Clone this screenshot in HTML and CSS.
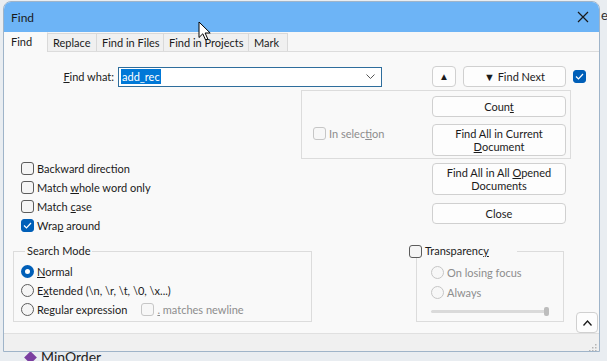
FILE: index.html
```html
<!DOCTYPE html>
<html lang="en">
  <head>
    <meta charset="UTF-8" />
    <title>Find</title>
    <link rel="stylesheet" href="styles.css">
  </head>
  <body>
    <div class="desk">
      <span class="desk-e">e</span>
      <div class="desk-row"><span class="desk-icon"></span><span>MinOrder</span></div>
    </div>

    <div class="dialog">
      <div class="titlebar">
        <span class="title">Find</span>
        <svg class="close" width="12" height="12" viewBox="0 0 12 12">
          <path d="M1 1 L11 11 M11 1 L1 11" stroke="#1a1a1a" stroke-width="1.2" fill="none" />
        </svg>
      </div>

      <div class="tabs">
        <span class="tab active">Find</span>
        <span class="tab w-replace">Replace</span>
        <span class="tab w-files">Find in Files</span>
        <span class="tab w-projects">Find in Projects</span>
        <span class="tab w-mark">Mark</span>
      </div>

      <div class="panel">
        <div class="find-row">
          <label class="find-label"><u>F</u>ind what:</label>
          <div class="combo">
            <span class="sel">add_rec</span>
            <svg class="chev" width="9" height="5" viewBox="0 0 9 5">
              <path d="M0.5 0.5 L4.5 4.5 L8.5 0.5" stroke="#555" fill="none" />
            </svg>
          </div>
          <button class="btn up">&#9650;</button>
          <button class="btn next">&#9660; Find Next</button>
          <span class="cb checked row-cb">
            <svg width="9" height="7" viewBox="0 0 9 7"><path d="M1 3.5 L3.5 6 L8 1" stroke="#fff" stroke-width="1.2" fill="none" /></svg>
          </span>
        </div>

        <div class="scope">
          <div class="scope-left">
            <label class="check disabled"><span class="cb"></span><span>In selec<u>t</u>ion</span></label>
          </div>
          <div class="btn-col">
            <button class="btn">Coun<u>t</u></button>
            <button class="btn tall">Find All in Current<br><u>D</u>ocument</button>
          </div>
        </div>

        <div class="middle">
          <div class="options">
            <label class="check"><span class="cb"></span><span>Backward direction</span></label>
            <label class="check"><span class="cb"></span><span>Match <u>w</u>hole word only</span></label>
            <label class="check"><span class="cb"></span><span>Match <u>c</u>ase</span></label>
            <label class="check">
              <span class="cb checked">
                <svg width="9" height="7" viewBox="0 0 9 7"><path d="M1 3.5 L3.5 6 L8 1" stroke="#fff" stroke-width="1.2" fill="none" /></svg>
              </span>
              <span>Wra<u>p</u> around</span>
            </label>
          </div>
          <div class="btn-col lower-btns">
            <button class="btn tall">Find All in All <u>O</u>pened<br>Documents</button>
            <button class="btn">Close</button>
          </div>
        </div>

        <div class="lower">
          <fieldset class="mode">
            <legend>Search Mode</legend>
            <label class="check"><span class="radio on"></span><span><u>N</u>ormal</span></label>
            <label class="check"><span class="radio"></span><span>E<u>x</u>tended (\n, \r, \t, \0, \x...)</span></label>
            <div class="check">
              <span class="radio"></span><span>Re<u>g</u>ular expression</span>
              <label class="check newline disabled"><span class="cb"></span><span><u>.</u> matches newline</span></label>
            </div>
          </fieldset>

          <fieldset class="transp">
            <legend><label class="check"><span class="cb"></span><span>Transparenc<u>y</u></span></label></legend>
            <label class="check disabled"><span class="radio"></span><span>On losing focus</span></label>
            <label class="check disabled"><span class="radio"></span><span>Always</span></label>
            <div class="slider"><span class="thumb"></span></div>
          </fieldset>

          <button class="btn collapse">
            <svg width="9" height="6" viewBox="0 0 9 6"><path d="M0.5 5.5 L4.5 1 L8.5 5.5" stroke="#1a1a1a" stroke-width="1.3" fill="none" /></svg>
          </button>
        </div>
      </div>

      <div class="statusbar">
        <svg class="grip" width="8" height="8" viewBox="0 0 8 8">
          <rect x="6" y="0" width="1.5" height="1.5" fill="#b5b5b5" />
          <rect x="3" y="3" width="1.5" height="1.5" fill="#b5b5b5" />
          <rect x="6" y="3" width="1.5" height="1.5" fill="#b5b5b5" />
          <rect x="0" y="6" width="1.5" height="1.5" fill="#b5b5b5" />
          <rect x="3" y="6" width="1.5" height="1.5" fill="#b5b5b5" />
          <rect x="6" y="6" width="1.5" height="1.5" fill="#b5b5b5" />
        </svg>
      </div>
    </div>

    <svg class="cursor" width="14" height="21" viewBox="0 0 14 21">
      <path d="M1 1 L1 16.5 L4.8 12.8 L7.6 19 L9.8 18 L7.1 12 L12.2 12 Z" fill="#fff" stroke="#000" stroke-width="1" stroke-linejoin="round" />
    </svg>
  </body>
</html>
```

FILE: styles.css
```css
body {
  margin: 0;
  width: 607px;
  height: 361px;
  overflow: hidden;
  position: relative;
  background-color: #e9edf1;
  font-family: Lato, "Noto Sans", sans-serif;
  font-size: 11px;
  color: #1b1b1b;
}
.desk {
  position: absolute;
  inset: 0;
}
.desk-e {
  position: absolute;
  top: 7px;
  left: 601px;
  font-size: 13px;
  color: #333;
}
.desk-row {
  position: absolute;
  top: 349px;
  left: 26px;
  display: flex;
  align-items: center;
  gap: 6px;
  font-size: 14px;
  line-height: 16px;
  color: #222;
}
.desk-icon {
  width: 9px;
  height: 9px;
  background-color: #7b3fa0;
  transform: rotate(45deg);
}
.dialog {
  position: absolute;
  top: 1px;
  left: 3px;
  width: 597px;
  height: 351px;
  background-color: #f9f9f9;
  border: 1px solid #9fb4c9;
  border-radius: 8px 8px 0 0;
  box-sizing: border-box;
  overflow: hidden;
  display: flex;
  flex-direction: column;
}
.titlebar {
  height: 30px;
  flex: none;
  background-color: #6db4f6;
  display: flex;
  align-items: center;
  justify-content: space-between;
  padding: 0 7px 0 7px;
}
.title {
  font-size: 12px;
  color: #1a1a1a;
}
.close {
  margin-right: 3px;
}
.tabs {
  height: 19px;
  flex: none;
  display: flex;
  align-items: flex-end;
  background-color: #f7f7f7;
  border-bottom: 1px solid #dcdcdc;
}
.tab {
  height: 18px;
  box-sizing: border-box;
  padding: 0 0 0 5px;
  display: flex;
  align-items: center;
  white-space: nowrap;
  overflow: hidden;
  background-color: #f0f0f0;
  border: 1px solid #d9d9d9;
  border-bottom: none;
  border-left: none;
}
.tab.active {
  height: 20px;
  width: 44px;
  margin-bottom: -1px;
  padding: 0 0 3px 7px;
  background-color: #f9f9f9;
  border-color: transparent #d9d9d9 transparent transparent;
}
.w-replace { width: 49px; }
.w-files { width: 67px; }
.w-projects { width: 85px; }
.w-mark { width: 39px; }

.panel {
  flex: 1;
  padding-top: 14px;
  position: relative;
}
.find-row {
  display: flex;
  align-items: center;
  height: 21px;
}
.find-label {
  width: 110px;
  text-align: right;
  margin-right: 4px;
}
.combo {
  width: 264px;
  height: 20px;
  box-sizing: border-box;
  background-color: #fff;
  border: 1px solid #2e6d9c;
  display: flex;
  align-items: center;
  justify-content: space-between;
  padding: 0 6px 0 2px;
}
.sel {
  background-color: #0078d7;
  color: #fff;
  padding: 0 1px;
  line-height: 15px;
}
.btn {
  font: inherit;
  color: #1b1b1b;
  background-color: #fdfdfd;
  border: 1px solid #d0d0d0;
  border-radius: 4px;
  height: 21px;
  padding: 0;
  line-height: 13px;
}
.up {
  width: 24px;
  margin-left: 50px;
  font-size: 10px;
}
.next {
  width: 103px;
  margin-left: 7px;
}
.row-cb {
  margin-left: 7px;
}

.cb {
  width: 13px;
  height: 13px;
  box-sizing: border-box;
  border: 1px solid #5c5c5c;
  border-radius: 3px;
  background-color: #f5f5f5;
  display: inline-flex;
  align-items: center;
  justify-content: center;
  flex: none;
}
.cb.checked {
  background-color: #005fb8;
  border-color: #005fb8;
}
.radio {
  width: 13px;
  height: 13px;
  box-sizing: border-box;
  border: 1px solid #5c5c5c;
  border-radius: 50%;
  background-color: #f5f5f5;
  flex: none;
}
.radio.on {
  border: 4px solid #005fb8;
  background-color: #fff;
}
.check {
  display: flex;
  align-items: center;
  gap: 3px;
  height: 19px;
  white-space: nowrap;
}
.disabled {
  color: #8d8d8d;
}
.disabled .cb,
.disabled .radio {
  border-color: #c6c6c6;
  background-color: #f7f7f7;
}

.scope {
  margin: 3px 0 0 297px;
  width: 270px;
  height: 69px;
  box-sizing: border-box;
  border: 1px solid #dcdcdc;
  display: flex;
}
.scope-left {
  width: 130px;
  padding: 33px 0 0 11px;
  box-sizing: border-box;
}
.btn-col {
  display: flex;
  flex-direction: column;
  gap: 7px;
  width: 134px;
  padding-top: 5px;
}
.btn-col .btn {
  width: 134px;
}
.btn.tall {
  height: 32px;
}

.middle {
  height: 85px;
  display: flex;
}
.options {
  width: 411px;
  padding-left: 17px;
}
.lower-btns {
  padding-top: 4px;
  gap: 8px;
}

.lower {
  display: flex;
  align-items: flex-start;
}
fieldset {
  margin: 0;
  padding: 0;
  border: 1px solid #dcdcdc;
  min-width: 0;
}
legend {
  line-height: 14px;
  padding: 0 2px;
}
.mode {
  margin-left: 9px;
  width: 299px;
  height: 78px;
  box-sizing: border-box;
  padding: 4px 0 0 7px;
}
.mode legend {
  margin-left: 4px;
}
.newline {
  margin-left: 11px;
}
.transp {
  margin-left: 104px;
  width: 148px;
  height: 78px;
  box-sizing: border-box;
  padding: 4px 0 0 14px;
}
.transp legend {
  margin-left: -22px;
  padding: 0 28px 0 0;
}
.transp legend .check {
  height: 14px;
}
.transp .check {
  height: 20px;
}
.slider {
  width: 118px;
  height: 3px;
  margin-top: 8px;
  background-color: #dadada;
  border-radius: 2px;
  display: flex;
  justify-content: flex-end;
  align-items: center;
}
.thumb {
  width: 5px;
  height: 9px;
  border-radius: 2px;
  background-color: #bdbdbd;
}
.collapse {
  width: 22px;
  margin: 68px 0 0 12px;
  display: flex;
  align-items: center;
  justify-content: center;
}

.statusbar {
  height: 18px;
  flex: none;
  background-color: #f0f0f0;
  border-top: 1px solid #e0e0e0;
  display: flex;
  justify-content: flex-end;
  align-items: flex-end;
  padding: 0 2px 2px 0;
}
.cursor {
  position: absolute;
  top: 21px;
  left: 198px;
}
```
